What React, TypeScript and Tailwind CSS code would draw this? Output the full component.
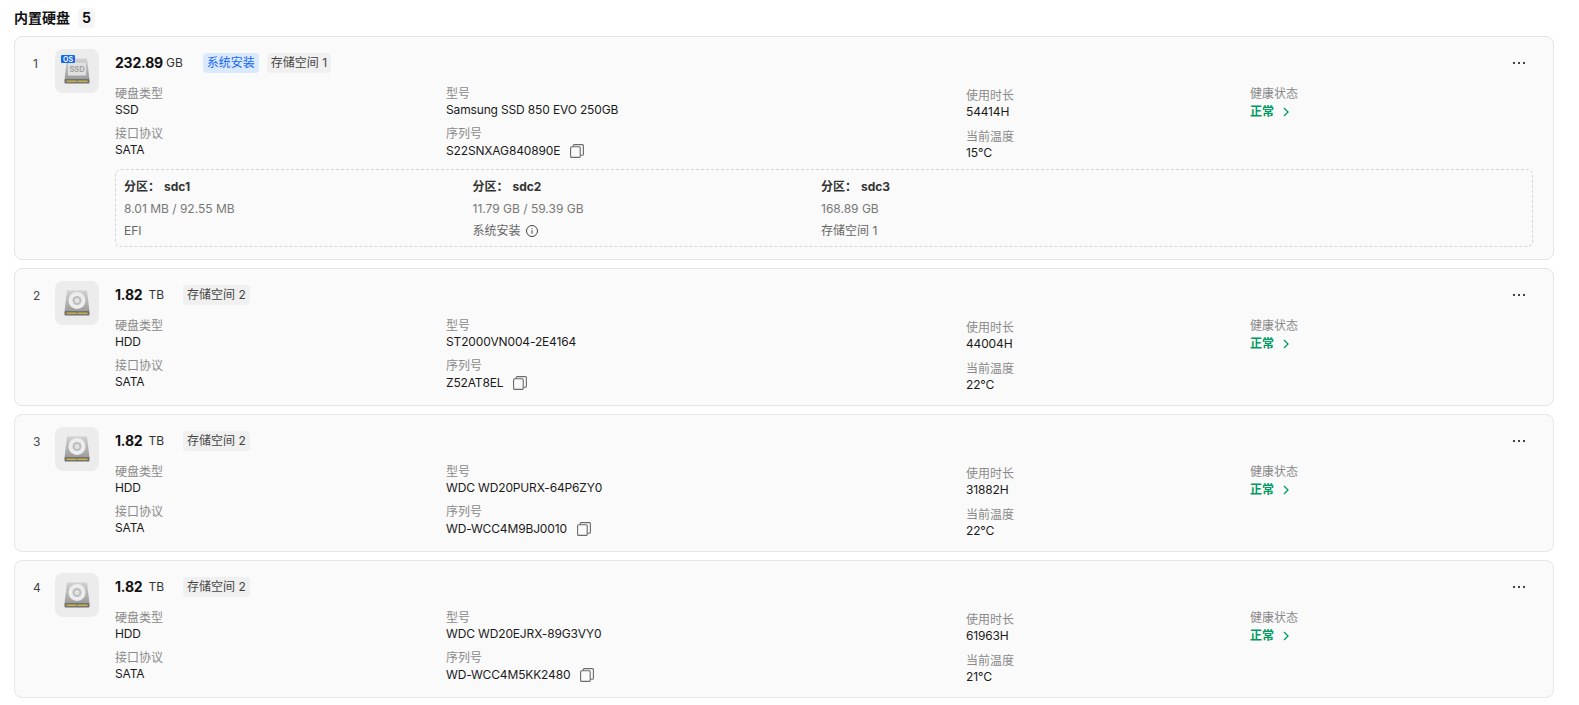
import React from "react";

const font = { fontFamily: '"Inter","Noto Sans CJK SC",sans-serif' };

function DiskBase({ children, id }: { children: React.ReactNode; id: string }) {
  return (
    <svg width="30" height="30" viewBox="0 0 30 30" className="block">
      <defs>
        <linearGradient id={id} x1="0" y1="0" x2="0" y2="1">
          <stop offset="0" stopColor="#d2d2d2" />
          <stop offset="1" stopColor="#9c9c9c" />
        </linearGradient>
      </defs>
      <path d="M5 2.5h20l2.5 21h-25z" fill={`url(#${id})`} />
      <rect x="2.5" y="23" width="25" height="4.5" rx="1" fill="#6f6f6f" />
      <rect x="4.5" y="24.5" width="10" height="1.6" fill="#c9b24a" />
      <rect x="15.5" y="24.5" width="10" height="1.6" fill="#c9b24a" />
      {children}
    </svg>
  );
}

function DiskIcon({ type, id }: { type: "ssd" | "hdd"; id: string }) {
  return (
    <div className="relative flex h-11 w-11 shrink-0 items-center justify-center rounded-lg bg-[#ececec]">
      {type === "ssd" ? (
        <>
          <DiskBase id={id}>
            <rect x="6" y="6.5" width="18" height="13" fill="#e0e0e0" />
            <text x="15" y="16" textAnchor="middle" fontSize="7.5" fontWeight="700" fill="#a0a0a0" fontFamily="Inter, sans-serif">SSD</text>
          </DiskBase>
          <span className="absolute left-[6px] top-[6px] flex h-[8px] w-[14px] items-center justify-center rounded-[1px] bg-[#1469f0] text-[7px] font-semibold leading-none text-white">OS</span>
        </>
      ) : (
        <DiskBase id={id}>
          <circle cx="15" cy="12.5" r="8.5" fill="#ededed" />
          <circle cx="15" cy="12.5" r="4.5" fill="#bdbdbd" />
          <circle cx="15" cy="12.5" r="2.5" fill="#e2e2e2" />
        </DiskBase>
      )}
    </div>
  );
}

function CopyIcon() {
  return (
    <svg width="14" height="14" viewBox="0 0 14 14" fill="none" stroke="#6b6b6b" strokeWidth="1.1" className="ml-2.5 shrink-0">
      <rect x="0.6" y="2.8" width="9.6" height="10.6" rx="1" />
      <path d="M3.2 2.8V1.6a1 1 0 0 1 1-1h8.2a1 1 0 0 1 1 1v8.6a1 1 0 0 1-1 1h-2.2" />
    </svg>
  );
}

function Field({ label, value, copy, className = "" }: { label: string; value: string; copy?: boolean; className?: string }) {
  return (
    <div className={className}>
      <div className="h-4 text-xs leading-4 text-[#8a8a8a]">{label}</div>
      <div className={`flex h-4 items-center text-xs leading-4 tracking-[-0.15px] text-[#1a1a1a] ${copy ? "mt-[1px]" : ""}`}>
        {value}
        {copy && <CopyIcon />}
      </div>
    </div>
  );
}

function Tag({ children, blue }: { children: React.ReactNode; blue?: boolean }) {
  return (
    <span className={`flex h-5 items-center rounded px-1 text-xs ${blue ? "bg-[#dbe9ff] text-[#1469f0]" : "bg-[#f0f0f0] text-[#444]"}`}>
      {children}
    </span>
  );
}

function Info() {
  return (
    <svg width="14" height="14" viewBox="0 0 14 14" fill="none" stroke="#444" className="ml-1">
      <circle cx="7" cy="7" r="5.5" />
      <path d="M7 6.2v3.6M7 4.2v1" />
    </svg>
  );
}

function Partition({ name, size, use, info }: { name: string; size: string; use: string; info?: boolean }) {
  return (
    <div className="w-[348.5px]">
      <div className="flex h-[22px] items-center text-xs font-bold text-[#333]">
        <span>分区：</span>
        <span className="ml-1">{name}</span>
      </div>
      <div className="flex h-[22px] items-center text-xs text-[#777]">{size}</div>
      <div className="flex h-[22px] items-center text-xs text-[#666]">
        {use}
        {info && <Info />}
      </div>
    </div>
  );
}

type D = {
  n: number; type: "ssd" | "hdd"; size: string; unit: string; kind: string; model: string;
  serial: string; hours: string; temp: string; space: string; sys?: boolean;
};

const disks: D[] = [
  { n: 1, type: "ssd", size: "232.89", unit: "GB", kind: "SSD", model: "Samsung SSD 850 EVO 250GB", serial: "S22SNXAG840890E", hours: "54414H", temp: "15℃", space: "存储空间 1", sys: true },
  { n: 2, type: "hdd", size: "1.82", unit: "TB", kind: "HDD", model: "ST2000VN004-2E4164", serial: "Z52AT8EL", hours: "44004H", temp: "22℃", space: "存储空间 2" },
  { n: 3, type: "hdd", size: "1.82", unit: "TB", kind: "HDD", model: "WDC WD20PURX-64P6ZY0", serial: "WD-WCC4M9BJ0010", hours: "31882H", temp: "22℃", space: "存储空间 2" },
  { n: 4, type: "hdd", size: "1.82", unit: "TB", kind: "HDD", model: "WDC WD20EJRX-89G3VY0", serial: "WD-WCC4M5KK2480", hours: "61963H", temp: "21℃", space: "存储空间 2" },
];

function Card({ d }: { d: D }) {
  return (
    <div className={`flex rounded-lg border border-[#e6e6e6] bg-[#fafafa] pl-[18px] pr-[20px] pt-3 ${d.sys ? "pb-3" : "pb-[12px]"}`}>
      <div className="w-[22px] shrink-0 pt-[5px] text-xs leading-5 text-[#444]">{d.n}</div>
      <DiskIcon type={d.type} id={`g${d.n}`} />
      <div className="ml-4 min-w-0 flex-1">
        <div className="flex h-[28px] items-center">
          <span className="text-sm font-bold tracking-[-0.2px] text-[#111]">{d.size}</span>
          <span className={`text-xs text-[#333] ${d.sys ? "ml-[3px]" : "ml-1.5"}`}>{d.unit}</span>
          <div className={`flex gap-2 ${d.sys ? "ml-5" : "ml-[19px]"}`}>
            {d.sys && <Tag blue>系统安装</Tag>}
            <Tag>{d.space}</Tag>
          </div>
          <div className="ml-auto mr-2 flex items-center gap-[3px]">
            <i className="h-[2px] w-[2px] bg-[#444]" />
            <i className="h-[2px] w-[2px] bg-[#444]" />
            <i className="h-[2px] w-[2px] bg-[#444]" />
          </div>
        </div>
        <div className="mt-2 grid grid-cols-[331px_520px_284px_1fr]">
          <div className="pt-[1px]">
            <Field label="硬盘类型" value={d.kind} />
            <Field label="接口协议" value="SATA" className="mt-2" />
          </div>
          <div className="pt-[1px]">
            <Field label="型号" value={d.model} />
            <Field label="序列号" value={d.serial} copy className="mt-2" />
          </div>
          <div className="pt-[3px]">
            <Field label="使用时长" value={d.hours} />
            <Field label="当前温度" value={d.temp} className="mt-[9px]" />
          </div>
          <div className="pt-[1px]">
            <div className="h-4 text-xs leading-4 text-[#8a8a8a]">健康状态</div>
            <div className="mt-[2px] flex h-4 items-center text-xs font-bold text-[#009a63]">
              正常
              <svg width="8" height="10" viewBox="0 0 8 10" fill="none" stroke="#009a63" strokeWidth="1.3" className="ml-2">
                <path d="M2 1l4 4-4 4" />
              </svg>
            </div>
          </div>
        </div>
        {d.sys && (
          <div className="mt-2 flex h-[78px] rounded-md border border-dashed border-[#d4d4d4] px-2 pb-[4px] pt-[6px]">
            <Partition name="sdc1" size="8.01 MB / 92.55 MB" use="EFI" />
            <Partition name="sdc2" size="11.79 GB / 59.39 GB" use="系统安装" info />
            <Partition name="sdc3" size="168.89 GB" use="存储空间 1" />
          </div>
        )}
      </div>
    </div>
  );
}

export default function App() {
  return (
    <div className="min-h-[705px] bg-white pl-[14px] pr-[25px] pt-2" style={font}>
      <div className="mb-[8px] flex h-5 items-center">
        <span className="text-sm font-bold text-[#111]">内置硬盘</span>
        <span className="ml-2 flex h-5 w-[17px] items-center justify-center rounded bg-[#f5f5f5] text-sm font-bold text-[#111]">5</span>
      </div>
      <div className="flex flex-col gap-2">
        {disks.map((d) => (
          <Card key={d.n} d={d} />
        ))}
      </div>
    </div>
  );
}
